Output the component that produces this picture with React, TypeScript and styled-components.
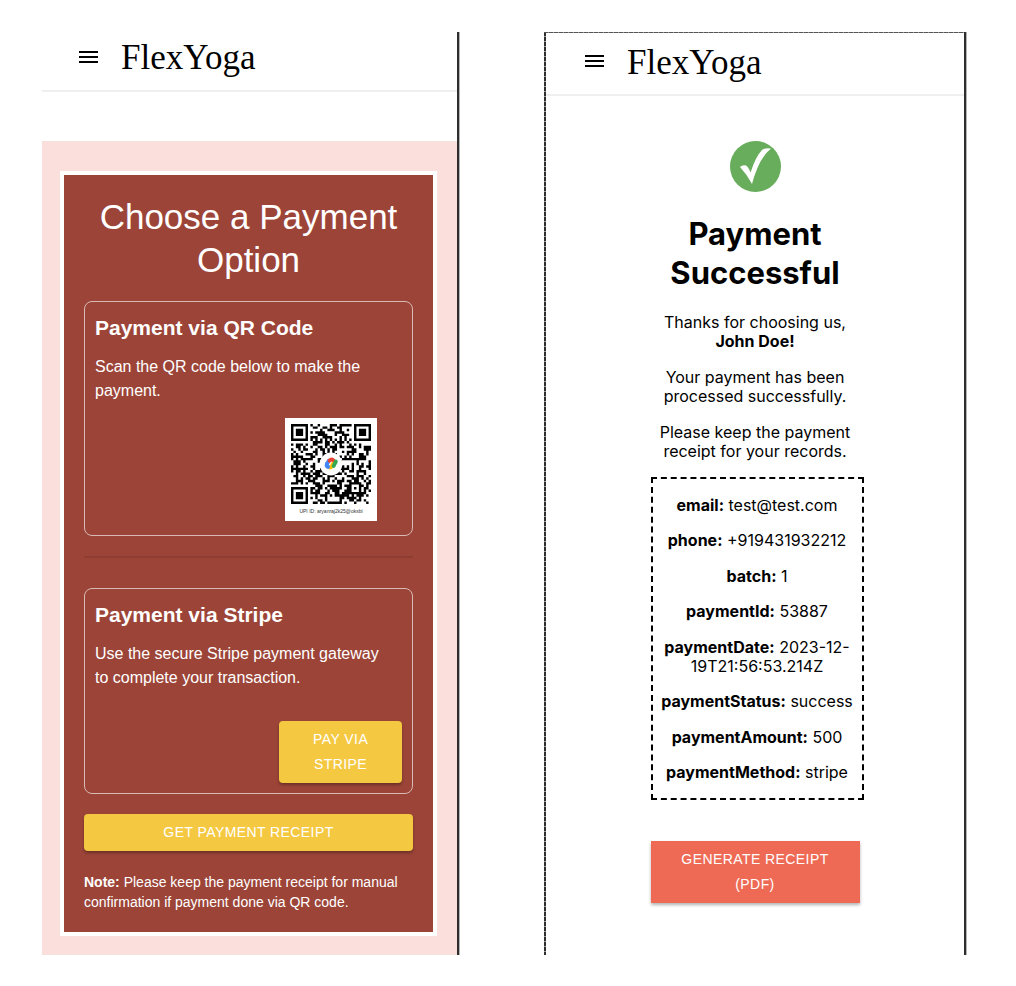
import React from "react";
import styled, { createGlobalStyle } from "styled-components";

const sans = `"Liberation Sans", Arial, sans-serif`;
const inter = `Inter, "Liberation Sans", sans-serif`;

const GlobalStyle = createGlobalStyle`
  *, *::before, *::after { box-sizing: border-box; }
  body { margin: 0; background: #fff; }
  h1, h2, h3, p, dl, dt, dd { margin: 0; }
`;

const Page = styled.div`
  display: grid;
  grid-template-columns: minmax(0, 417fr) minmax(0, 422fr);
  column-gap: 85px;
  padding: 32px 50px 31px 42px;
`;

const Screen = styled.section`
  display: flex;
  flex-direction: column;
  min-height: 923px;
  border-right: 2px solid #2e2e2e;
  box-shadow: 1px 0 0 #b4b4b4;
`;

// Tight dashes along the top and left edges.
const FramedScreen = styled(Screen)`
  padding: 1px 0 0 2px;
  background:
    repeating-linear-gradient(to right, #555 0 4px, #999 4px 5px) top left / 100% 1px no-repeat,
    repeating-linear-gradient(to bottom, #2e2e2e 0 4px, #999 4px 5px) top left / 2px 100% no-repeat;
`;

const Header = styled.header<{ $tall?: boolean }>`
  display: flex;
  align-items: center;
  gap: 20px;
  height: ${(p) => (p.$tall ? 63 : 60)}px;
  padding: ${(p) => (p.$tall ? "0 36px 4px" : "0 34px 8px")};
  border-bottom: 2px solid #efefef;
`;

const MenuButton = styled.button`
  display: flex;
  padding: 0;
  border: 0;
  background: none;
  color: #000;
  cursor: pointer;
`;

const Brand = styled.a`
  padding-top: 2px;
  font: 35px/44px "Liberation Serif", "Times New Roman", serif;
  color: #000;
  text-decoration: none;
`;

const OptionsArea = styled.main`
  margin-top: 49px;
  padding: 30px 20px 19px 18px;
  background: #fadfdc;
`;

const OptionsCard = styled.div`
  display: flex;
  flex-direction: column;
  padding: 20px;
  border: 4px solid #fff;
  background: #9c4438;
  color: #fff;
  font-family: ${sans};
`;

const CardTitle = styled.h1`
  margin-bottom: 20px;
  font-size: 35px;
  line-height: 43px;
  font-weight: 400;
  text-align: center;
`;

const Option = styled.section`
  display: flex;
  flex-direction: column;
  padding: 10px;
  border: 1px solid #d9bab6;
  border-radius: 8px;
`;

const OptionTitle = styled.h2`
  font-size: 21px;
  line-height: 32px;
  font-weight: 700;
`;

const OptionText = styled.p`
  margin-top: 11px;
  padding-right: 12px;
  font-size: 16px;
  line-height: 24px;
`;

const QrCard = styled.figure`
  display: flex;
  flex-direction: column;
  align-items: center;
  align-self: flex-end;
  width: 92px;
  height: 103px;
  margin: 15px 25px 4px 0;
  padding-top: 6px;
  background: #fff;
`;

const QrCaption = styled.figcaption`
  margin-top: 3px;
  color: #333;
  font-size: 5px;
  line-height: 8px;
`;

const Divider = styled.hr`
  width: 100%;
  height: 2px;
  margin: 20px 0 30px;
  border: 0;
  background: #8f3c32;
`;

const Button = styled.button<{ $tone: "yellow" | "coral" }>`
  padding: 6px 16px;
  border: 0;
  border-radius: ${(p) => (p.$tone === "coral" ? 0 : 4)}px;
  background: ${(p) => (p.$tone === "coral" ? "#ee6a55" : "#f5c842")};
  box-shadow: 0 2px 3px rgba(0, 0, 0, 0.3);
  color: #fff;
  font: 400 14px/25px ${sans};
  letter-spacing: 0.03em;
  text-transform: uppercase;
  cursor: pointer;
`;

const StripeButton = styled(Button)`
  align-self: flex-end;
  width: 40%;
  margin-top: 31px;
`;

const ReceiptButton = styled(Button)`
  width: 100%;
  margin-top: 20px;
`;

const Note = styled.p`
  margin-top: 21px;
  font-size: 14px;
  line-height: 20px;
`;

const Confirmation = styled.main`
  display: flex;
  flex-direction: column;
  width: 50%;
  margin: 45px auto 0;
  color: #000;
  font: 16px/19px ${inter};
  text-align: center;
`;

const CheckIcon = styled.svg`
  align-self: center;
`;

const SuccessTitle = styled.h1`
  margin: 22px 0 21px;
  font-size: 31px;
  line-height: 39px;
  font-weight: 700;
`;

const Messages = styled.div`
  display: grid;
  gap: 17px;
`;

const Details = styled.dl`
  display: flex;
  flex-direction: column;
  justify-content: space-between;
  min-height: 323px;
  margin: 16px -4px 0 0;
  padding: 17px 8px 16px;
  border: 2px dashed #000;
`;

const Detail = styled.div`
  dt { display: inline; font-weight: 700; }
  dd { display: inline; }
`;

const PdfButton = styled(Button)`
  margin-top: 41px;
`;

const SIZE = 33;

// Finder squares, their quiet zones, timing tracks and the alignment square;
// null where the module carries data.
function fixedModule(x: number, y: number): boolean | null {
  const corners = [[0, 0], [SIZE - 7, 0], [0, SIZE - 7]];
  for (const [cx, cy] of corners) {
    const d = Math.max(Math.abs(x - cx - 3), Math.abs(y - cy - 3));
    if (d <= 4) return d !== 2 && d !== 4;
  }
  const a = Math.max(Math.abs(x - 26), Math.abs(y - 26));
  if (a <= 2) return a !== 1;
  if (y === 6) return x % 2 === 0;
  if (x === 6) return y % 2 === 0;
  return null;
}

function buildModules() {
  let seed = 20471;
  let path = "";
  for (let y = 0; y < SIZE; y++) {
    for (let x = 0; x < SIZE; x++) {
      seed = (seed * 1103515245 + 12345) % 2147483648;
      const fixed = fixedModule(x, y);
      if (fixed ?? (seed >> 16) % 2 === 0) path += `M${x} ${y}h1v1h-1z`;
    }
  }
  return path;
}

const modules = buildModules();

const QrCode = () => (
  <svg width="80" height="80" viewBox="0 0 33 33" role="img" aria-label="Payment QR code">
    <path d={modules} fill="#000" />
    <circle cx="16.5" cy="16.5" r="4.700" fill="#fff" />
    <g fill="none" strokeWidth="1.600" strokeLinecap="round">
      <path d="M15.600 15.200L14.900 16.400" stroke="#4285f4" />
      <path d="M17.900 15.400L16.800 17.400Q16.300 18.200 15.600 17.800" stroke="#fbbc04" />
      <path d="M15.900 15.100Q16.600 14.400 17.400 14.900" stroke="#ea4335" />
      <path d="M18.500 15.500L17.600 17.300" stroke="#34a853" />
      <path d="M14.800 16.500Q14.500 17.400 15.300 17.700" stroke="#4285f4" />
    </g>
  </svg>
);

const MenuIcon = () => (
  <svg width="25" height="25" viewBox="0 0 25 25" aria-hidden="true">
    <path d="M3 6h19v2H3zM3 11h19v2H3zM3 16h19v2H3z" fill="currentColor" />
  </svg>
);

const AppHeader = ({ tall }: { tall?: boolean }) => (
  <Header $tall={tall}>
    <MenuButton type="button" aria-label="Open menu"><MenuIcon /></MenuButton>
    <Brand href="#">FlexYoga</Brand>
  </Header>
);

const details: [string, string][] = [
  ["email", "test@test.com"],
  ["phone", "+919431932212"],
  ["batch", "1"],
  ["paymentId", "53887"],
  ["paymentDate", "2023-12-19T21:56:53.214Z"],
  ["paymentStatus", "success"],
  ["paymentAmount", "500"],
  ["paymentMethod", "stripe"],
];

export default function App() {
  return (
    <>
      <GlobalStyle />
      <Page>
        <Screen>
          <AppHeader />
          <OptionsArea>
            <OptionsCard>
              <CardTitle>Choose a Payment Option</CardTitle>
              <Option>
                <OptionTitle>Payment via QR Code</OptionTitle>
                <OptionText>Scan the QR code below to make the payment.</OptionText>
                <QrCard>
                  <QrCode />
                  <QrCaption>UPI ID: aryanraj2k25@oksbi</QrCaption>
                </QrCard>
              </Option>
              <Divider />
              <Option>
                <OptionTitle>Payment via Stripe</OptionTitle>
                <OptionText>Use the secure Stripe payment gateway to complete your transaction.</OptionText>
                <StripeButton type="button" $tone="yellow">Pay via Stripe</StripeButton>
              </Option>
              <ReceiptButton type="button" $tone="yellow">Get payment receipt</ReceiptButton>
              <Note>
                <strong>Note:</strong> Please keep the payment receipt for manual confirmation if payment done via QR code.
              </Note>
            </OptionsCard>
          </OptionsArea>
        </Screen>

        <FramedScreen>
          <AppHeader tall />
          <Confirmation>
            <CheckIcon width="51" height="51" viewBox="0 0 51 51" role="img" aria-label="Success">
              <circle cx="25.5" cy="25.5" r="25.5" fill="#67ad5b" />
              <path d="M10 26Q12.500 23.500 16 24.500Q18.500 26 20.500 31.500Q26 15 32 9Q34.500 6.500 41 7.500Q29 17 22 43Q17 33.500 10 26z" fill="#fff" />
            </CheckIcon>
            <SuccessTitle>Payment Successful</SuccessTitle>
            <Messages>
              <p>Thanks for choosing us, <strong>John Doe!</strong></p>
              <p>Your payment has been processed successfully.</p>
              <p>Please keep the payment receipt for your records.</p>
            </Messages>
            <Details>
              {details.map(([name, value]) => (
                <Detail key={name}>
                  <dt>{name}:</dt> <dd>{value}</dd>
                </Detail>
              ))}
            </Details>
            <PdfButton type="button" $tone="coral">Generate receipt (PDF)</PdfButton>
          </Confirmation>
        </FramedScreen>
      </Page>
    </>
  );
}
